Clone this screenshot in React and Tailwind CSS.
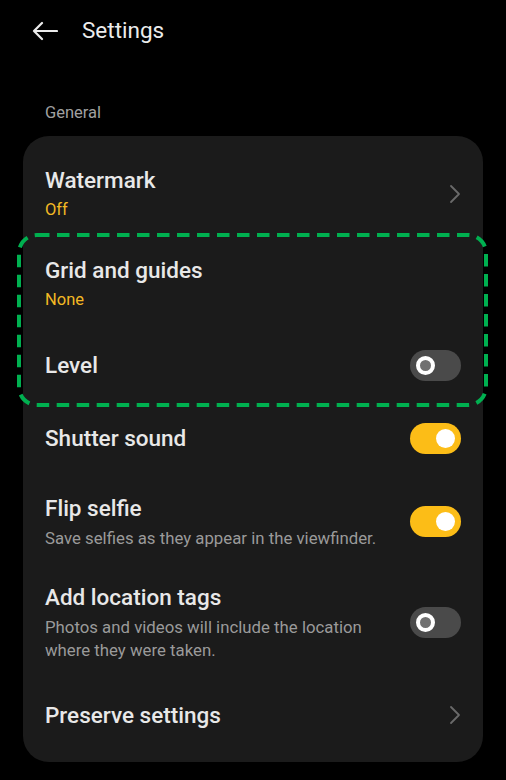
import React from "react";

function Chevron() {
  return (
    <svg width="12" height="20" viewBox="0 0 12 20" fill="none">
      <path d="M2 2 L10 10 L2 18" stroke="#6a6a6a" strokeWidth="1.8" strokeLinecap="round" strokeLinejoin="round" />
    </svg>
  );
}

function Toggle({ on }) {
  if (on) {
    return (
      <div className="w-[51px] h-[31px] rounded-full bg-[#fcbd17] flex items-center justify-end pr-[6px] shrink-0">
        <div className="w-[19px] h-[19px] rounded-full bg-white" />
      </div>
    );
  }
  return (
    <div className="w-[51px] h-[31px] rounded-full bg-[#4a4a4a] flex items-center pl-[6px] shrink-0">
      <div className="w-[19px] h-[19px] rounded-full border-[4px] border-white bg-[#707070]" />
    </div>
  );
}

function Row({ title, value, sub, right, height }) {
  return (
    <div className="flex items-center justify-between px-[22px]" style={{ height }}>
      <div className="flex flex-col">
        <div className="text-[22.5px] leading-[28px] font-medium text-[#e8e8e8]">{title}</div>
        {value && <div className="mt-[3px] text-[16.5px] leading-[26px] text-[#f2b824]">{value}</div>}
        {sub && <div className="mt-[5px] text-[16.8px] leading-[23px] text-[#9a9a9a] max-w-[340px]">{sub}</div>}
      </div>
      {right}
    </div>
  );
}

export default function App() {
  return (
    <div className="w-[506px] h-[780px] bg-black overflow-hidden" style={{ fontFamily: "Roboto, 'Liberation Sans', sans-serif" }}>
      {/* header */}
      <div className="flex items-center h-[62px] pl-[32px]">
        <svg width="26" height="20" viewBox="0 0 26 20" fill="none">
          <path d="M25 10 H2 M10 2 L2 10 L10 18" stroke="#ececec" strokeWidth="2.2" strokeLinecap="round" strokeLinejoin="round" />
        </svg>
        <div className="ml-[24px] text-[22.5px] text-[#ececec]">Settings</div>
      </div>

      <div className="pl-[45px] pt-[39px] h-[74px] text-[16.5px] leading-[24px] text-[#a0a0a0]">General</div>

      {/* card */}
      <div className="mx-[23px] rounded-[26px] bg-[#1b1b1b] pt-[14px] pb-[11px]">
        <Row title="Watermark" value="Off" height={88} right={<Chevron />} />

        <div className="relative">
          <Row title="Grid and guides" value="None" height={93} />
          <Row title="Level" height={68} right={<Toggle on={false} />} />
          <svg className="absolute left-[-6px] top-[-5px] pointer-events-none" width="471" height="174" viewBox="0 0 471 174" fill="none">
            <rect x="2" y="2" width="467" height="170" rx="18" stroke="#00b050" strokeWidth="4" strokeDasharray="12.5 7.5" />
          </svg>
        </div>

        <Row title="Shutter sound" height={78} right={<Toggle on />} />
        <Row title="Flip selfie" sub="Save selfies as they appear in the viewfinder." height={89} right={<Toggle on />} />
        <Row
          title="Add location tags"
          sub="Photos and videos will include the location where they were taken."
          height={113}
          right={<Toggle on={false} />}
        />
        <Row title="Preserve settings" height={72} right={<Chevron />} />
      </div>
    </div>
  );
}
